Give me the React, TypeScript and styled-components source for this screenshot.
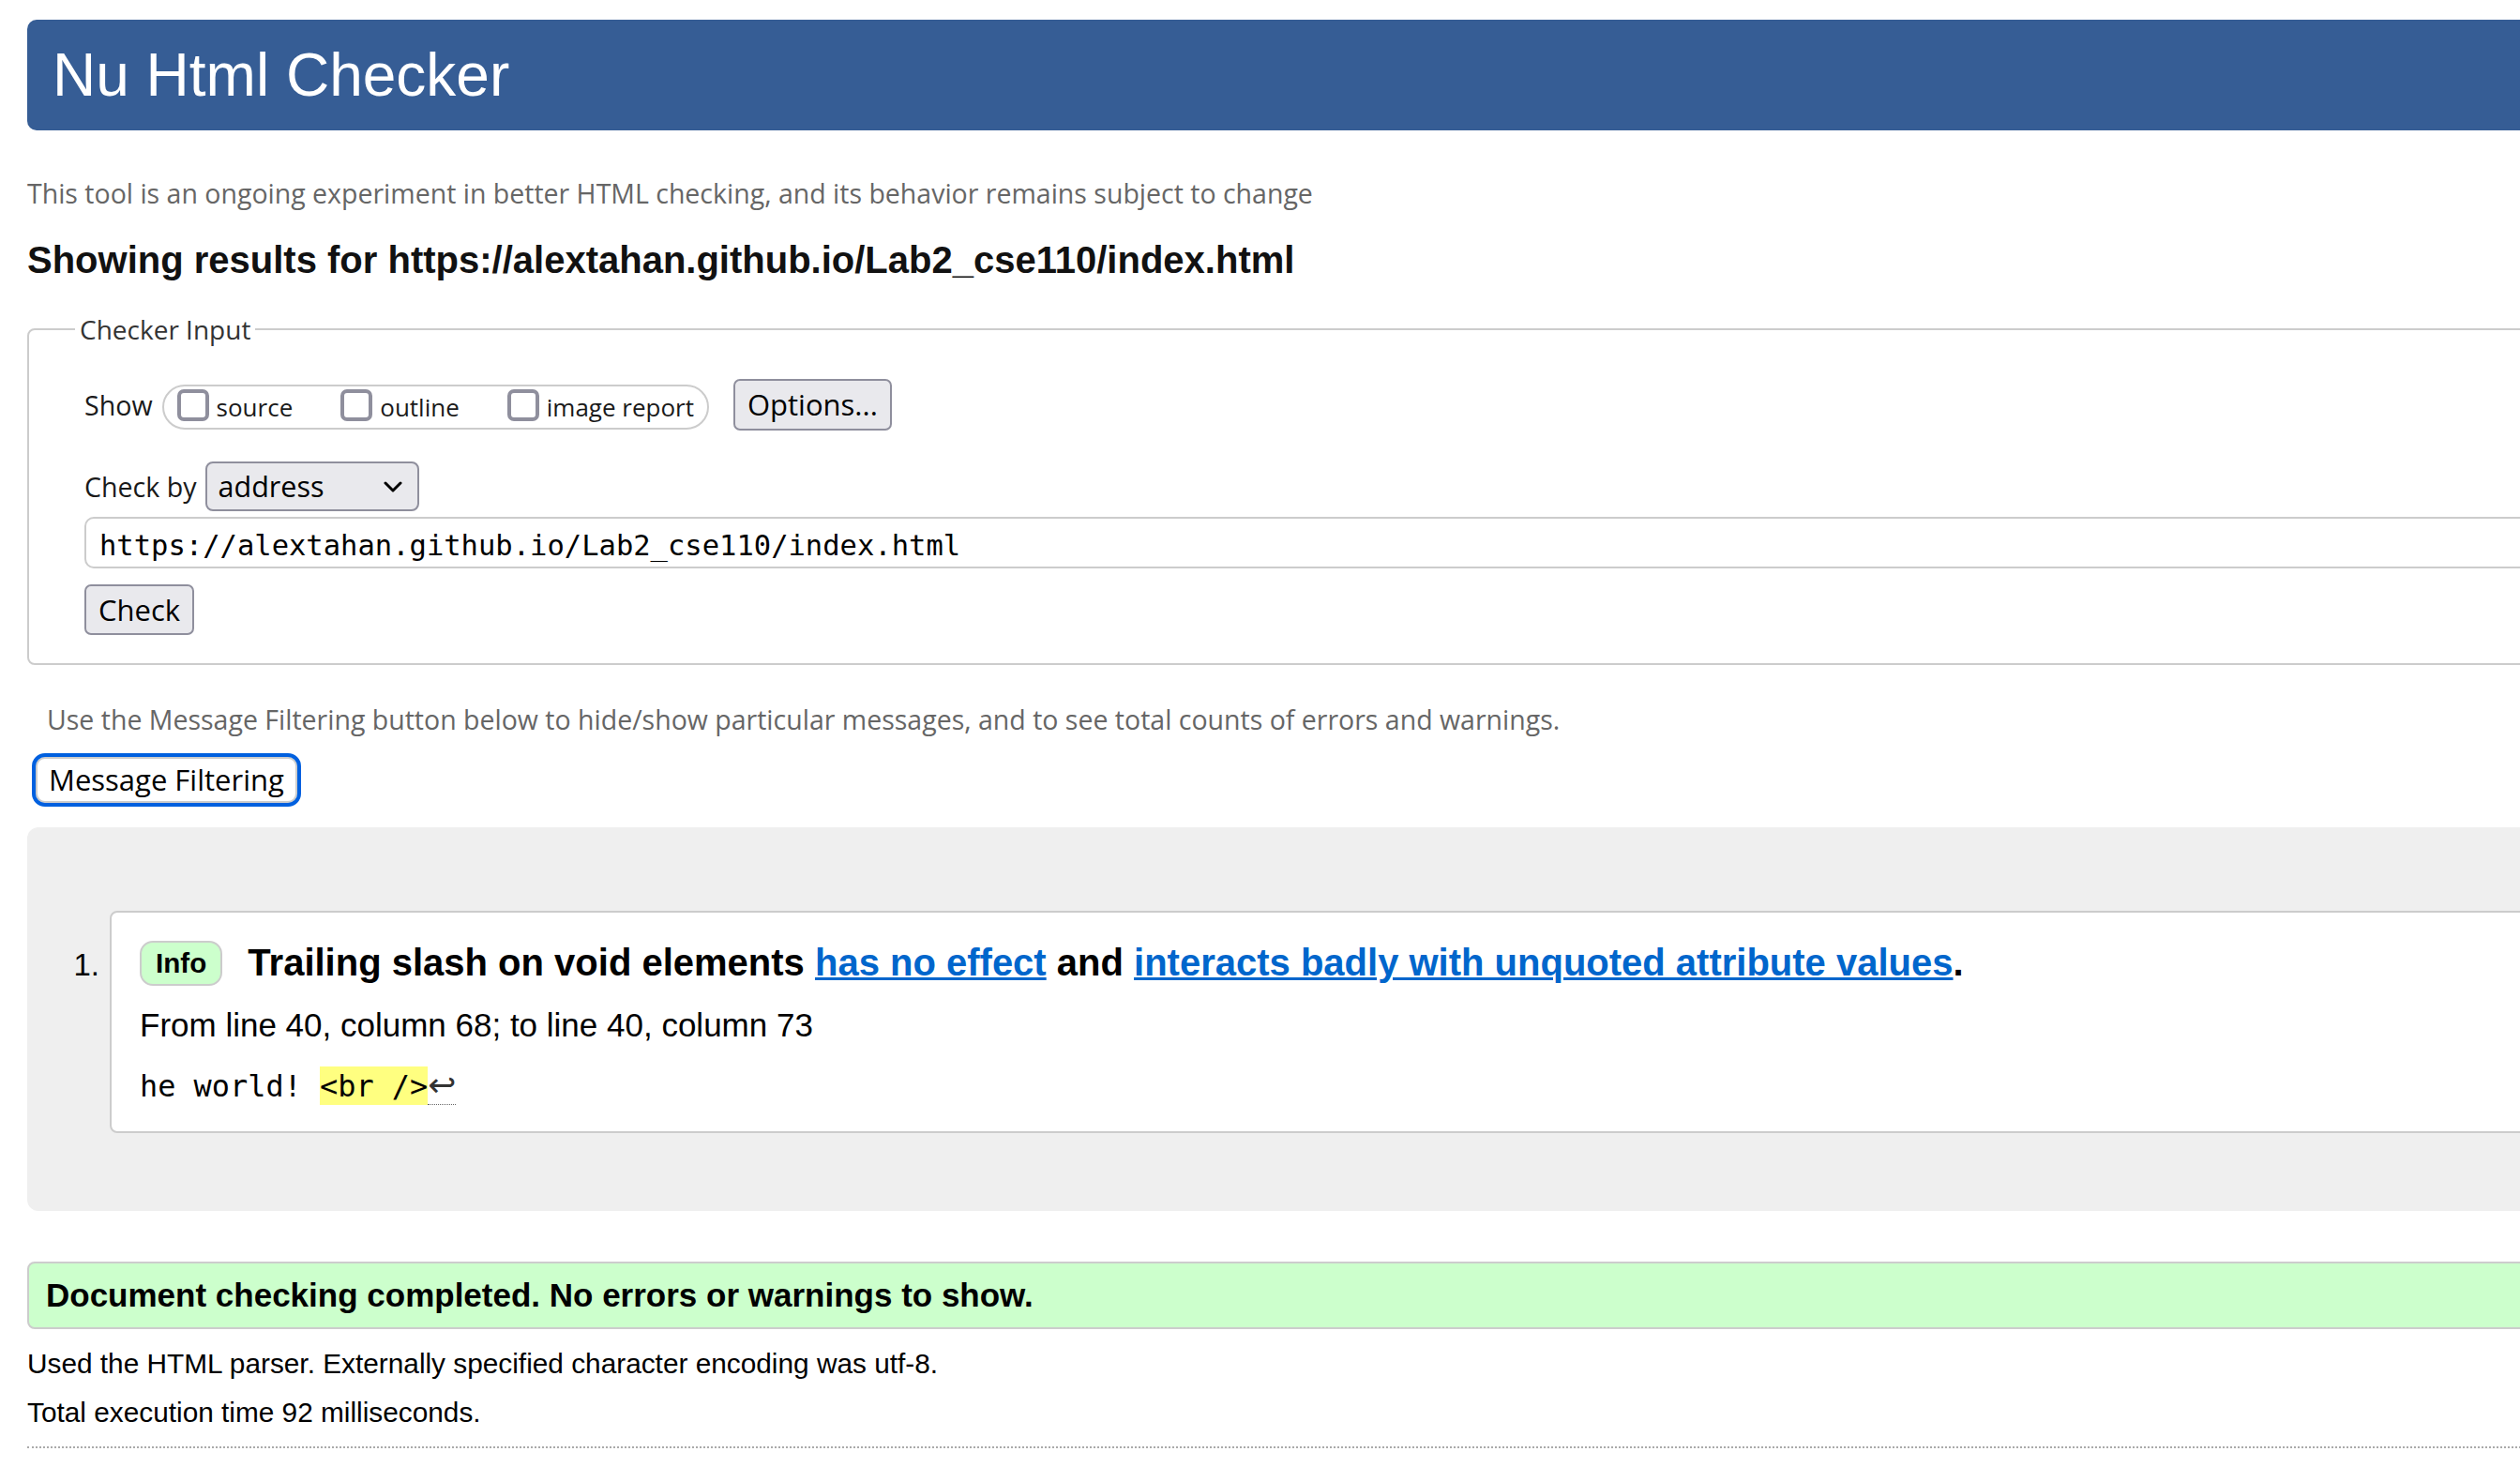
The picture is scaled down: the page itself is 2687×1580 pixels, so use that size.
import React from "react";
import styled, { createGlobalStyle } from "styled-components";

const UI = `"Open Sans", "Noto Sans", sans-serif`;
const SANS = `"Liberation Sans", Arial, sans-serif`;
const MONO = `"DejaVu Sans Mono", "Liberation Mono", monospace`;

const GlobalStyle = createGlobalStyle`
  html, body { margin: 0; padding: 0; background: #fff; overflow: hidden; }
  body { font-family: ${SANS}; color: #000; }
  *, *::before, *::after { box-sizing: border-box; }
`;

const Page = styled.div`
  width: 2780px;
  padding: 21px 0 0 29px;
`;

const Header = styled.h1`
  margin: 0;
  height: 118px;
  padding-left: 27px;
  background: #365d95;
  color: #fff;
  font: 400 64px/118px ${SANS};
  border-radius: 10px 0 0 10px;
`;

const Note = styled.p<{ $top: number; $indent?: number }>`
  margin: ${(p) => p.$top}px 0 0 ${(p) => p.$indent ?? 0}px;
  font: 400 28.5px/36px ${UI};
  color: #666;
`;

const ResultsFor = styled.h2`
  margin: 30.6px 0 0;
  font: 700 40px/46px ${SANS};
  color: #111;
`;

const Fieldset = styled.fieldset`
  margin: 31.6px 0 0;
  padding: 34px 0 30px 59px;
  border: 2px solid #ccc;
  border-radius: 8px 0 0 8px;
  min-width: 0;
`;

const Legend = styled.legend`
  margin-left: -10px;
  padding: 0 5px;
  font: 400 28px/38px ${UI};
  color: #333;
`;

const Row = styled.div<{ $top?: number }>`
  display: flex;
  align-items: center;
  margin-top: ${(p) => p.$top ?? 0}px;
`;

const FieldLabel = styled.span<{ $gap: number }>`
  margin-right: ${(p) => p.$gap}px;
  font: 400 28.6px/38px ${UI};
  color: #1a1a1a;
`;

const CheckGroup = styled.div`
  display: flex;
  align-items: center;
  gap: 51px;
  height: 48px;
  margin-top: 5px;
  padding: 0 14px;
  border: 2px solid #ccc;
  border-radius: 24px;
`;

const CheckItem = styled.label`
  display: flex;
  align-items: center;
  gap: 8px;
  font: 400 26px/34px ${UI};
  color: #1a1a1a;
`;

const CheckBox = styled.input.attrs({ type: "checkbox" })`
  appearance: none;
  flex: none;
  width: 34px;
  height: 34px;
  margin: 0 0 4px;
  border: 4px solid #8f8f9d;
  border-radius: 7px;
  background: #fff;
`;

const FormButton = styled.button<{ $h: number; $left?: number }>`
  height: ${(p) => p.$h}px;
  margin-left: ${(p) => p.$left ?? 0}px;
  padding: 0 13px;
  background: #e9e9ed;
  border: 2px solid #8f8f9d;
  border-radius: 7px;
  color: #000;
  font: 400 31px/1 ${UI};
`;

const Select = styled.div`
  display: flex;
  align-items: center;
  justify-content: space-between;
  width: 228px;
  height: 53px;
  padding: 0 16px 0 12px;
  background: #e9e9ed;
  border: 2px solid #8f8f9d;
  border-radius: 8px;
  font: 400 30.5px/1 ${UI};
  color: #000;
`;

const UrlInput = styled.input`
  display: block;
  width: 100%;
  height: 55px;
  margin-top: 6px;
  padding: 6px 14px 0;
  border: 2px solid #ccc;
  border-radius: 10px;
  background: #fff;
  color: #000;
  font: 400 30.5px/1 ${MONO};
  outline: none;
`;

const CheckRow = styled.div`
  margin-top: 17px;
`;

const FilterButton = styled.button`
  display: block;
  height: 49px;
  margin: 22px 0 0 9px;
  padding: 0 12px;
  background: #fff;
  border: 2px solid #ccc;
  border-radius: 10px;
  outline: 4px solid #0060df;
  color: #000;
  font: 400 31px/45px ${UI};
`;

const Results = styled.section`
  margin-top: 26px;
  padding: 89px 0 83px;
  background: #efefef;
  border-radius: 12px 0 0 12px;
`;

const MessageList = styled.ol`
  margin: 0;
  padding: 0;
  list-style: none;
`;

const MessageItem = styled.li`
  display: flex;
  align-items: baseline;
`;

const Ordinal = styled.span`
  flex: none;
  width: 88px;
  padding-right: 11px;
  text-align: right;
  font: 400 33px/38px ${SANS};
  color: #000;
`;

const Card = styled.div`
  flex: 1;
  padding: 30px 0 29px 30px;
  background: #fff;
  border: 2px solid #ccc;
  border-radius: 8px 0 0 8px;
`;

const MessageTitle = styled.p`
  margin: 0;
  font: 700 40px/46px ${SANS};
  color: #000;
`;

const Badge = styled.span`
  display: inline-block;
  vertical-align: 3px;
  height: 48px;
  margin-right: 16px;
  padding: 0 15px;
  background: #ccffcc;
  border: 2px solid #ccc;
  border-radius: 14px;
  font: 700 29.6px/44px ${SANS};
`;

const DocLink = styled.a`
  color: #0066cc;
  text-decoration: underline;
  text-decoration-thickness: 3px;
`;

const Location = styled.p`
  margin: 22px 0 0;
  font: 400 35px/40px ${SANS};
  color: #000;
`;

const Extract = styled.p`
  margin: 25px 0 0;
  font: 400 31.9px/37px ${MONO};
  white-space: pre;
  color: #000;
`;

const Highlight = styled.mark`
  padding: 2px 0 1.5px;
  background: #ffff80;
  color: #000;
`;

const LineFeed = styled.span`
  font-family: "DejaVu Sans", sans-serif;
  font-size: 36px;
  color: #333;
  border-bottom: 1.5px dotted #666;
`;

const Success = styled.p`
  margin: 54px 0 0;
  padding: 14px 0 14px 18px;
  background: #ccffcc;
  border: 2px solid #ccc;
  border-radius: 8px 0 0 8px;
  font: 700 35px/40px ${SANS};
  color: #000;
`;

const Details = styled.p<{ $top: number }>`
  margin: ${(p) => p.$top}px 0 0;
  font: 400 29.8px/34px ${SANS};
  color: #000;
`;

const Rule = styled.hr`
  margin: 19px 0 0;
  border: 0;
  border-top: 2px dotted #aaa;
`;

const Chevron = () => (
  <svg width="20" height="12" viewBox="0 0 20 12" aria-hidden="true">
    <path d="M2 2 L10 10 L18 2" fill="none" stroke="#000" strokeWidth="3" strokeLinecap="round" strokeLinejoin="round" />
  </svg>
);

const url = "https://alextahan.github.io/Lab2_cse110/index.html";

export default function App() {
  return (
    <>
      <GlobalStyle />
      <Page>
        <Header>Nu Html Checker</Header>
        <Note $top={48.9}>
          This tool is an ongoing experiment in better HTML checking, and its behavior remains subject to change
        </Note>
        <ResultsFor>Showing results for {url}</ResultsFor>

        <Fieldset>
          <Legend>Checker Input</Legend>
          <Row>
            <FieldLabel $gap={10}>Show</FieldLabel>
            <CheckGroup>
              <CheckItem>
                <CheckBox />
                source
              </CheckItem>
              <CheckItem>
                <CheckBox />
                outline
              </CheckItem>
              <CheckItem>
                <CheckBox />
                image report
              </CheckItem>
            </CheckGroup>
            <FormButton $h={55} $left={26}>Options...</FormButton>
          </Row>
          <Row $top={33}>
            <FieldLabel $gap={9}>Check by</FieldLabel>
            <Select>
              <span>address</span>
              <Chevron />
            </Select>
          </Row>
          <UrlInput readOnly defaultValue={url} />
          <CheckRow>
            <FormButton $h={54}>Check</FormButton>
          </CheckRow>
        </Fieldset>

        <Note $top={39.9} $indent={21}>
          Use the Message Filtering button below to hide/show particular messages, and to see total counts of errors and warnings.
        </Note>
        <FilterButton>Message Filtering</FilterButton>

        <Results>
          <MessageList>
            <MessageItem>
              <Ordinal>1.</Ordinal>
              <Card>
                <MessageTitle>
                  <Badge>Info</Badge> Trailing slash on void elements{" "}
                  <DocLink href="#">has no effect</DocLink> and{" "}
                  <DocLink href="#">interacts badly with unquoted attribute values</DocLink>.
                </MessageTitle>
                <Location>From line 40, column 68; to line 40, column 73</Location>
                <Extract>
                  {"he world! "}
                  <Highlight>{"<br />"}</Highlight>
                  <LineFeed>↩</LineFeed>
                </Extract>
              </Card>
            </MessageItem>
          </MessageList>
        </Results>

        <Success>Document checking completed. No errors or warnings to show.</Success>
        <Details $top={20}>Used the HTML parser. Externally specified character encoding was utf-8.</Details>
        <Details $top={18}>Total execution time 92 milliseconds.</Details>
        <Rule />
      </Page>
    </>
  );
}
